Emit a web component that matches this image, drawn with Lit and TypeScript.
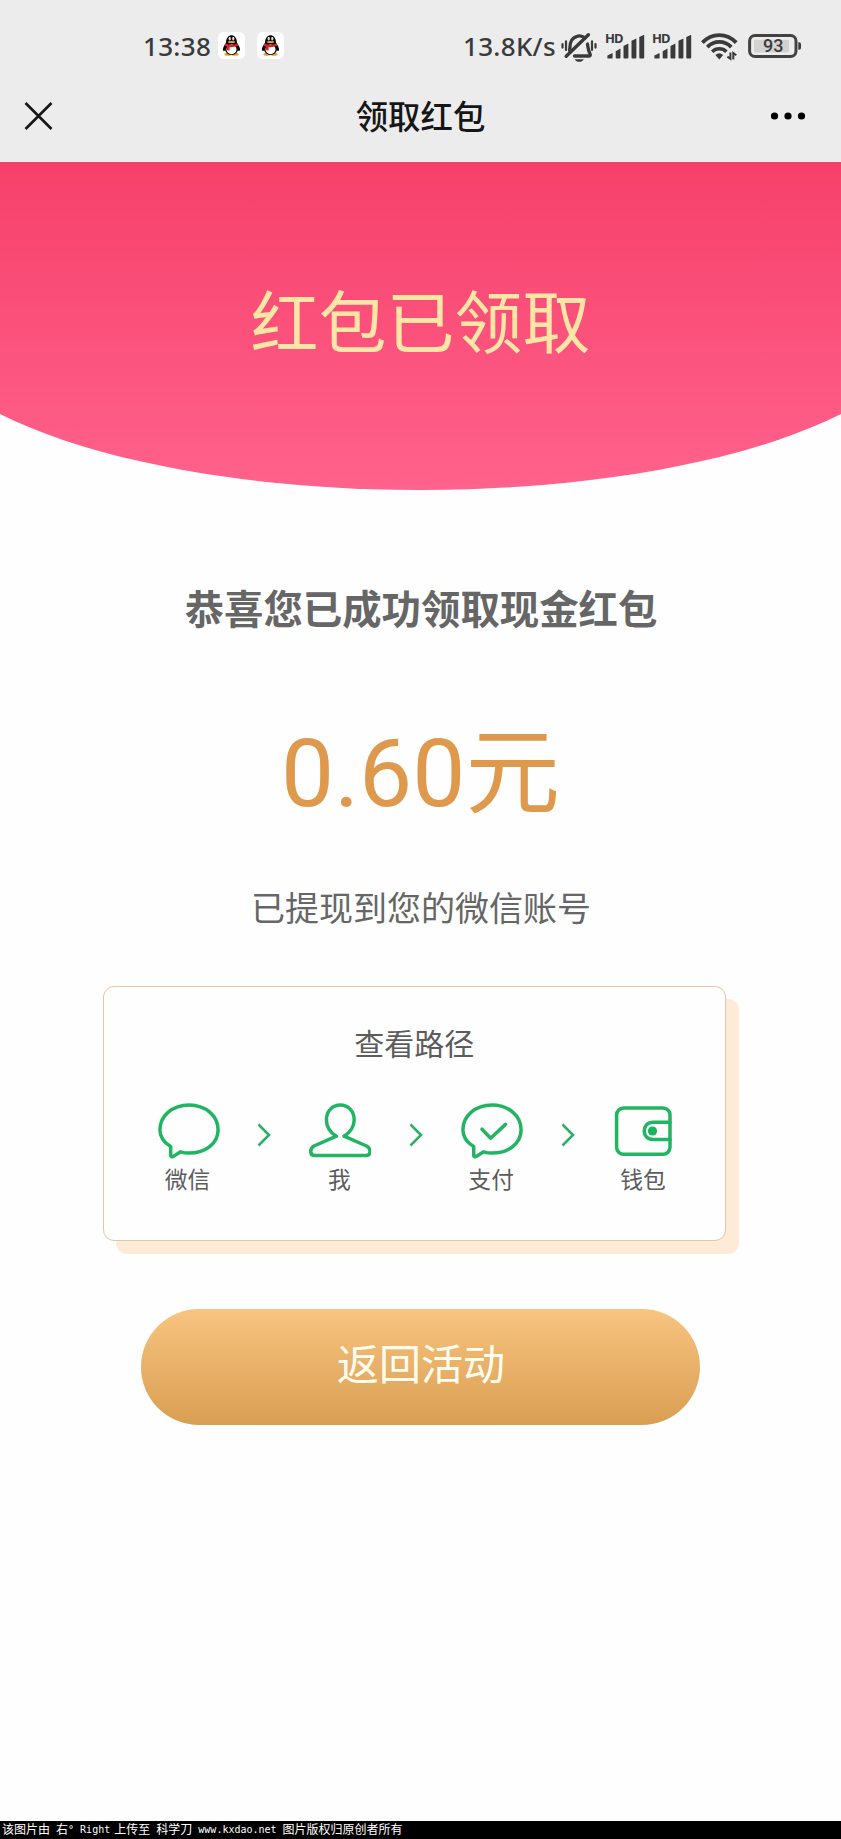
import { LitElement, html, css, svg } from "lit";
import { customElement, property } from "lit/decorators.js";

const PENGUIN = html`<svg class="qq" width="27" height="27" viewBox="0 0 27 27">
  <rect width="27" height="27" rx="6" fill="#fff"/>
  <path d="M8 11C8 0.8 19 0.8 19 11C22.4 15.4 22.6 18.2 21.4 19C20.6 19.2 20 18 19.4 17.4L7.6 17.4C7 18 6.4 19.2 5.6 19C4.4 18.2 4.6 15.4 8 11Z" fill="#080808"/>
  <ellipse cx="10" cy="22.2" rx="3.6" ry="1.5" fill="#e8a020"/>
  <ellipse cx="17" cy="22.2" rx="3.6" ry="1.5" fill="#e8a020"/>
  <ellipse cx="13.5" cy="17" rx="6.6" ry="6" fill="#080808"/>
  <ellipse cx="13.5" cy="17.4" rx="5" ry="4.8" fill="#fff"/>
  <ellipse cx="11.8" cy="6.8" rx="1.2" ry="1.7" fill="#fff"/>
  <ellipse cx="15.2" cy="6.8" rx="1.2" ry="1.7" fill="#fff"/>
  <circle cx="12.1" cy="7.1" r="0.5"/><circle cx="14.9" cy="7.1" r="0.5"/>
  <ellipse cx="13.5" cy="10" rx="3.7" ry="1.1" fill="#f0a51c"/>
  <path d="M7.3 11.2Q13.5 14.8 19.7 11.2L20.2 13.6Q16 15.8 11.6 15.2V18.6L9 18.2V14.8L6.8 13.6Z" fill="#d9222a"/>
</svg>`;

const BELL = html`<svg class="bell" width="36" height="32" viewBox="0 0 36 32" fill="none" stroke="#3a3a3a" stroke-linecap="round">
  <path d="M8.6 18.6C9.2 15 8.6 11.6 10.5 8.5C13.6 3.3 20.2 2.6 24 6" stroke-width="3.3"/>
  <path d="M26.5 12C27.2 15.5 26.8 18 29 21.8C29.7 23.2 29.2 24 28 24H13.5" stroke-width="3.3"/>
  <path d="M5.2 24.3L27.4 2.8" stroke-width="3.4"/>
  <path d="M13.6 27.2H22.8C21.2 30.6 15.2 30.6 13.6 27.2Z" fill="#3a3a3a" stroke="none"/>
  <path d="M1.5 12V15.6M5 9.4V18M31 9.4V18M34.5 12V15.6" stroke-width="2.2"/>
</svg>`;

const SIGNAL = html`<svg class="signal" width="41" height="27" viewBox="0 0 41 27">
  <text x="0" y="10.4" class="hd" textLength="18.5">HD</text>
  <g fill="#3a3a3a">
    <path d="M2.4 25V22.6L7.6 20V24.4Q7.6 25.6 6.4 25.6H3Q2.4 25.6 2.4 25Z"/>
    <path d="M10.7 18.2L15.5 15.6V24.6Q15.5 25.6 14.5 25.6H11.7Q10.7 25.6 10.7 24.6Z"/>
    <path d="M18.5 13L23.4 10.4V24.6Q23.4 25.6 22.4 25.6H19.5Q18.5 25.6 18.5 24.6Z"/>
    <path d="M26.5 7.8L31.4 5.6V24.6Q31.4 25.6 30.4 25.6H27.5Q26.5 25.6 26.5 24.6Z"/>
    <path d="M34.3 4L39.2 1.8V24.6Q39.2 25.6 38.2 25.6H35.3Q34.3 25.6 34.3 24.6Z"/>
  </g>
</svg>`;

const WIFI = html`<svg class="wifi" width="37" height="28" viewBox="0 0 37 28" fill="none" stroke="#3a3a3a">
  <path d="M1.4 9.6C10.8 -0.5 25.8 -0.5 35.2 9.6" stroke-width="3.8"/>
  <path d="M6.3 14.1C13 7.2 23.6 7.2 30.3 14.1" stroke-width="3.8"/>
  <path d="M11.2 18.7C15 14.8 21.6 14.8 25.4 18.7" stroke-width="3.6"/>
  <path d="M14.4 21.9Q18.3 18.8 22.2 21.9L18.3 26.6Z" fill="#3a3a3a" stroke="none"/>
  <path d="M29.4 19.4V25.8L26.4 23.6M32.3 26.4V20L35.3 22.2" stroke-width="2"/>
</svg>`;

const BATTERY = html`<svg class="battery" width="54" height="24" viewBox="0 0 54 24">
  <rect x="1.6" y="1.5" width="46.4" height="21" rx="5.5" fill="none" stroke="#424242" stroke-width="3"/>
  <rect x="6" y="5.8" width="35" height="12.6" rx="1.5" fill="#d2d2d2"/>
  <path d="M50.3 8.2H51.2Q53 8.2 53 10.2V13.8Q53 15.8 51.2 15.8H50.3Z" fill="#3a3a3a"/>
  <text x="15" y="18.4" class="level" textLength="20.5">93</text>
</svg>`;

const SPEECH = "M12.7 43.6C6 39.6 1.9 33.8 1.9 26.8C1.9 12.8 14.6 2 31 2C47.5 2 60.1 12.8 60.1 26.8C60.1 40.6 47.5 50.1 31 50.1Q26.5 50.1 22.6 48.8L15.4 53.4Q12.7 54.6 12.7 52.2Z";

const GLYPHS: Record<string, unknown> = {
  chat: svg`<path d=${SPEECH}/>`,
  me: svg`<path d="M27.4 33.2C21 29.5 17.4 23 17.4 16.8C17.4 8 23.6 2 31.3 2C39 2 45.2 8 45.2 16.8C45.2 23 41.5 29.5 35 33.2L57.6 43C62.8 46.2 61.8 52.6 57 52.6H6C0.8 52.6 0.2 46.2 5 43L27.4 33.2"/>`,
  pay: svg`<path d=${SPEECH}/><path d="M21 26.2L29.7 35.2L44.5 21.4"/>`,
  wallet: svg`<rect x="3.6" y="5" width="53.4" height="46.2" rx="7"/><path d="M57 19.2H40.2C28.2 19.2 28.2 36.6 40.2 36.6H57"/><circle cx="39.5" cy="28" r="4.6" fill="#16b45c" stroke="none"/>`,
};

@customElement("path-step")
class PathStep extends LitElement {
  @property() icon = "chat";
  @property() label = "";
  static styles = css`
    :host { display: flex; flex-direction: column; align-items: center; width: 62px; }
    .icon { display: block; fill: none; stroke: #22b463; stroke-width: 3.5; stroke-linecap: round; stroke-linejoin: round; }
    .label { margin: 5px 2px 0 0; font-size: 22.8px; line-height: 32px; color: #5c5c5c; white-space: nowrap; }
  `;
  render() {
    return html`<svg class="icon" width="62" height="57" viewBox="0 0 62 57">${GLYPHS[this.icon]}</svg>
      <span class="label">${this.label}</span>`;
  }
}

@customElement("app-root")
class AppRoot extends LitElement {
  static styles = css`
    :host { display: flex; flex-direction: column; height: 1839px; background: #fefefe; overflow: hidden;
      font-family: Roboto, "Noto Sans CJK SC", sans-serif; color: #666; }
    svg { display: block; flex: none; overflow: visible; }
    .status { display: flex; align-items: flex-start; height: 80px; box-sizing: border-box; padding: 32px 39px 0 143px; background: #ececec; }
    .clock, .speed { font: 500 26px/29px "Noto Sans", sans-serif; color: #3a3a3a; white-space: nowrap; }
    .clock { width: 74.5px; letter-spacing: 0.3px; }
    .qq { margin: 0 12px 0 0; }
    .speed { margin-left: auto; width: 97.5px; letter-spacing: 0.3px; }
    .bell { margin-right: 8px; }
    .signal { margin: 1px 6px 0 0; }
    .wifi { margin: 1px 10px 0 2.5px; }
    .battery { margin-top: 1.5px; }
    .hd { font: 700 13px "Noto Sans", sans-serif; fill: #3a3a3a; }
    .level { font: 500 18px Roboto, sans-serif; fill: #3a3a3a; }
    .nav { display: grid; grid-template-columns: 60px 1fr 60px; align-items: center; height: 82px; padding: 0 20px; box-sizing: border-box; background: #ececec; }
    .nav .page { text-align: center; font-size: 32.4px; line-height: 40px; font-weight: 500; color: #161616; margin-bottom: 6px; }
    .nav svg { margin-bottom: 10px; }
    .more { justify-self: end; margin-right: 13px; }
    .hero { display: flex; justify-content: center; align-items: center; height: 328px; margin: 0 -84px; padding-bottom: 2px; box-sizing: border-box;
      background: linear-gradient(#f6406a, #ff628c); border-radius: 0 0 50% 50% / 0 0 170px 170px; }
    .hero .done { font-size: 68px; line-height: 80px; color: #ffe6a5; }
    .body { display: flex; flex-direction: column; align-items: center; flex: 1; padding-top: 92px; box-sizing: border-box; }
    .congrats { margin-left: 1px; font-size: 39.4px; line-height: 58px; font-weight: 700; }
    .amount { margin-top: 79px; font-size: 94.6px; line-height: 110px; color: #de994d; }
    .note { margin: 55px 0 0 1px; font-size: 34px; line-height: 50px; }
    .card { display: flex; flex-direction: column; margin: 52px 12px 0 0; width: 623px; height: 255px; box-sizing: border-box; padding: 34px 50px 0 53.5px;
      border: 1.5px solid #dfc9ac; border-radius: 11px; background: #fefefe; box-shadow: 13px 13px 0 #fdebd7; }
    .card .caption { margin-right: 4px; text-align: center; font-size: 30px; line-height: 48px; color: #5c5c5c; }
    .steps { display: flex; justify-content: space-between; margin-top: 34px; }
    .chevron { margin-top: 20px; }
    .back { display: flex; align-items: center; justify-content: center; margin-top: 68px; width: 559px; height: 116px; box-sizing: border-box; padding: 0 0 11px 1px; border: 0; border-radius: 58px;
      background: linear-gradient(#f8c480, #d99e52); color: #fffdf0; font-family: inherit; font-size: 42px; }
    .credit { display: flex; align-items: center; height: 18px; padding-left: 2px; background: #000; color: #fff; font: 12px/18px "DejaVu Sans Mono", "Noto Sans CJK SC", monospace; white-space: pre; }
    .credit .latin { font-size: 10px; }
    .credit .name { margin-right: -2px; }
  `;

  private chevron() {
    return html`<svg class="chevron" width="14" height="24" viewBox="0 0 14 24" fill="none" stroke="#2aae68" stroke-width="2.5"><path d="M1.5 1.5L12 12L1.5 22.5"/></svg>`;
  }

  render() {
    return html`
      <div class="status">
        <span class="clock">13:38</span>${PENGUIN}${PENGUIN}
        <span class="speed">13.8K/s</span>${BELL}${SIGNAL}${SIGNAL}${WIFI}${BATTERY}
      </div>
      <div class="nav">
        <svg width="36" height="36" viewBox="0 0 36 36" stroke="#161616" stroke-width="2.6"><path d="M5.5 5L31.5 31M31.5 5L5.5 31"/></svg>
        <span class="page">领取红包</span>
        <svg class="more" width="40" height="12" viewBox="0 0 40 12"><circle cx="6.5" cy="6" r="3.6"/><circle cx="20" cy="6" r="3.6"/><circle cx="33.5" cy="6" r="3.6"/></svg>
      </div>
      <div class="hero"><span class="done">红包已领取</span></div>
      <div class="body">
        <div class="congrats">恭喜您已成功领取现金红包</div>
        <div class="amount">0.60元</div>
        <div class="note">已提现到您的微信账号</div>
        <div class="card">
          <div class="caption">查看路径</div>
          <div class="steps">
            <path-step icon="chat" label="微信"></path-step>${this.chevron()}
            <path-step icon="me" label="我"></path-step>${this.chevron()}
            <path-step icon="pay" label="支付"></path-step>${this.chevron()}
            <path-step icon="wallet" label="钱包"></path-step>
          </div>
        </div>
        <button class="back">返回活动</button>
      </div>
      <div class="credit"><span>该图片由</span><span class="latin"> </span><span>右</span><span class="latin name">° Right </span><span>上传至</span><span class="latin"> </span><span>科学刀</span><span class="latin"> www.kxdao.net </span><span>图片版权归原创者所有</span></div>
    `;
  }
}
